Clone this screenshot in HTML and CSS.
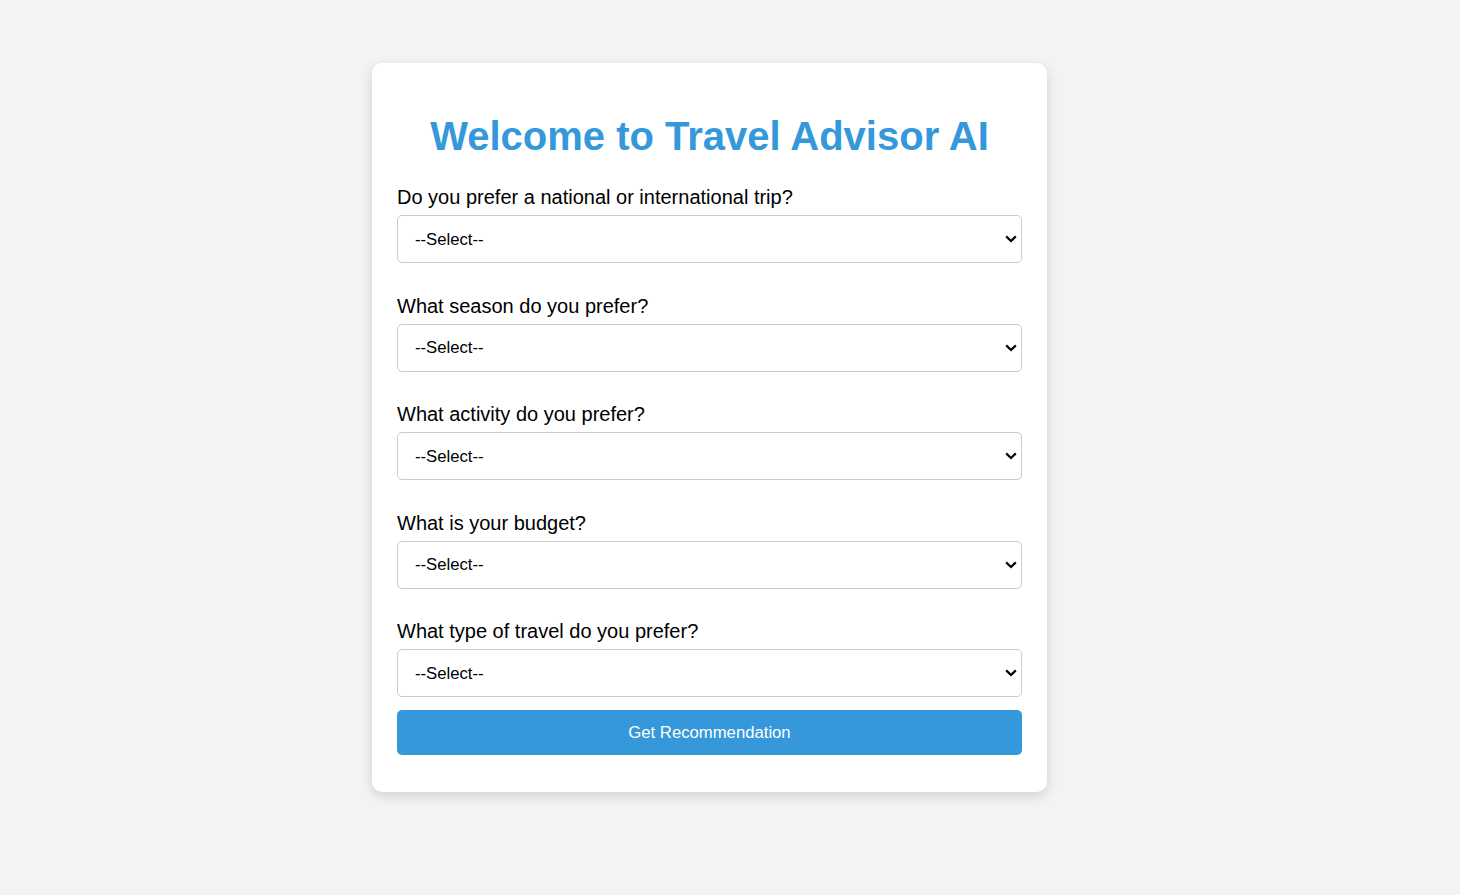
FILE: index.html
```html
<!DOCTYPE html>
<html lang="en">
<head>
<meta charset="utf-8">
<title>Travel Advisor AI</title>
<link rel="stylesheet" href="styles.css">
</head>
<body>
<div class="card">
  <h1 class="title">Welcome to Travel Advisor AI</h1>
  <form class="form">
    <div class="field">
      <label class="label" for="q1">Do you prefer a national or international trip?</label>
      <div class="select-wrap">
        <select class="select" id="q1"><option>--Select--</option></select>
        <svg class="chevron" width="12" height="8" viewBox="0 0 12 8"><path d="M1.2 1.4 L6 6 L10.8 1.4" fill="none" stroke="#000" stroke-width="2.2"/></svg>
      </div>
    </div>
    <div class="field">
      <label class="label" for="q2">What season do you prefer?</label>
      <div class="select-wrap">
        <select class="select" id="q2"><option>--Select--</option></select>
        <svg class="chevron" width="12" height="8" viewBox="0 0 12 8"><path d="M1.2 1.4 L6 6 L10.8 1.4" fill="none" stroke="#000" stroke-width="2.2"/></svg>
      </div>
    </div>
    <div class="field">
      <label class="label" for="q3">What activity do you prefer?</label>
      <div class="select-wrap">
        <select class="select" id="q3"><option>--Select--</option></select>
        <svg class="chevron" width="12" height="8" viewBox="0 0 12 8"><path d="M1.2 1.4 L6 6 L10.8 1.4" fill="none" stroke="#000" stroke-width="2.2"/></svg>
      </div>
    </div>
    <div class="field">
      <label class="label" for="q4">What is your budget?</label>
      <div class="select-wrap">
        <select class="select" id="q4"><option>--Select--</option></select>
        <svg class="chevron" width="12" height="8" viewBox="0 0 12 8"><path d="M1.2 1.4 L6 6 L10.8 1.4" fill="none" stroke="#000" stroke-width="2.2"/></svg>
      </div>
    </div>
    <div class="field field-last">
      <label class="label" for="q5">What type of travel do you prefer?</label>
      <div class="select-wrap">
        <select class="select" id="q5"><option>--Select--</option></select>
        <svg class="chevron" width="12" height="8" viewBox="0 0 12 8"><path d="M1.2 1.4 L6 6 L10.8 1.4" fill="none" stroke="#000" stroke-width="2.2"/></svg>
      </div>
    </div>
    <button class="button" type="button">Get Recommendation</button>
  </form>
</div>
</body>
</html>
```
FILE: styles.css
```css
html, body {
  margin: 0;
  padding: 0;
}
body {
  background: #f3f3f3;
  font-family: "Liberation Sans", Arial, sans-serif;
  padding: 63px 41px 0 0;
  height: 895px;
  box-sizing: border-box;
}
.card {
  width: 625px;
  margin: 0 auto;
  background: #fff;
  padding: 25px;
  border-radius: 10px;
  box-shadow: 0 4px 12px rgba(0, 0, 0, 0.14);
}
.title {
  margin: 25px 0 27px;
  text-align: center;
  color: #3498db;
  font-size: 40px;
  line-height: 46px;
  font-weight: bold;
}
.form {
  display: flex;
  flex-direction: column;
}
.field {
  display: flex;
  flex-direction: column;
  margin-bottom: 31.5px;
}
.field-last {
  margin-bottom: 13px;
}
.label {
  font-size: 20px;
  line-height: 23px;
  color: #000;
  margin-bottom: 6px;
}
.select-wrap {
  position: relative;
}
.select {
  display: block;
  width: 100%;
  height: 48px;
  padding: 0 16px 0 17px;
  font-family: "Liberation Sans", Arial, sans-serif;
  font-size: 16.7px;
  color: #000;
  background: #fff;
  border: 1px solid #ccc;
  border-radius: 5px;
  box-sizing: border-box;
  appearance: none;
  -webkit-appearance: none;
}
.chevron {
  position: absolute;
  right: 5px;
  top: 20px;
  pointer-events: none;
}
.button {
  height: 45px;
  width: 100%;
  background: #3498db;
  color: #fff;
  border: none;
  border-radius: 5px;
  font-family: "Liberation Sans", Arial, sans-serif;
  font-size: 16.7px;
  margin-bottom: 12px;
}
```
